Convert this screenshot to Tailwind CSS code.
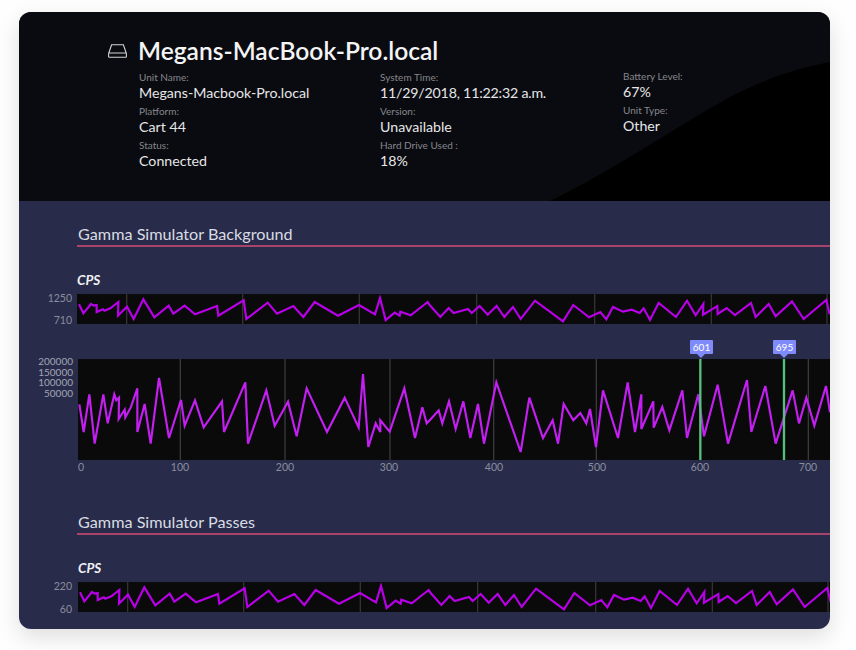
<!DOCTYPE html>
<html lang="en">
<head>
    <meta charset="UTF-8">
    <meta name="viewport" content="width=device-width, initial-scale=1.0">
    <script src="https://cdn.jsdelivr.net/npm/@tailwindcss/browser@4"></script>
    <title>Unit details</title>
</head>
<body class="bg-[#fefefe] font-['Lato','Open_Sans',sans-serif]">
    <div class="pt-[12px] pl-[19px] w-[856px] h-[650px] overflow-hidden">
        <div class="w-[811px] h-[617px] rounded-[12px] overflow-hidden bg-[#282c4a] shadow-[0_8px_22px_rgba(0,0,0,0.13)]">

            <!-- unit header -->
            <div class="relative h-[189px] bg-[#0a0b10]">
                <svg class="absolute left-0 top-0" width="811" height="189" viewBox="0 0 811 189">
                    <path d="M531 189 C 600 155, 640 125, 711 85 C 750 65, 780 56, 811 50 L811 189 Z" fill="#000"></path>
                </svg>
                <div class="relative pl-[89px] pt-[24px]">
                    <div class="flex items-center h-[30px]">
                        <svg class="mr-[11px]" width="19" height="14" viewBox="0 0 19 14" fill="none" stroke="#d6d6d8" stroke-width="1.1">
                            <path d="M.8 9 3.6.8h11.8L18.2 9"></path>
                            <rect x=".6" y="9" width="17.8" height="4.2" rx=".8"></rect>
                        </svg>
                        <h1 class="text-[24.6px] leading-[30px] font-semibold text-[#f4f4f5]">Megans-MacBook-Pro.local</h1>
                    </div>
                    <div class="flex pl-[31px] mt-[5px]">
                        <div class="w-[241px] flex flex-col gap-[3px]">
                            <div><p class="text-[10px] leading-[12px] text-[#85868c]">Unit Name:</p><p class="text-[14.2px] leading-[19px] text-[#e6e6e8]">Megans-Macbook-Pro.local</p></div>
                            <div><p class="text-[10px] leading-[12px] text-[#85868c]">Platform:</p><p class="text-[14.2px] leading-[19px] text-[#e6e6e8]">Cart 44</p></div>
                            <div><p class="text-[10px] leading-[12px] text-[#85868c]">Status:</p><p class="text-[14.2px] leading-[19px] text-[#e6e6e8]">Connected</p></div>
                        </div>
                        <div class="w-[243px] flex flex-col gap-[3px]">
                            <div><p class="text-[10px] leading-[12px] text-[#85868c]">System Time:</p><p class="text-[14.2px] leading-[19px] tracking-[-0.2px] text-[#e6e6e8]">11/29/2018, 11:22:32 a.m.</p></div>
                            <div><p class="text-[10px] leading-[12px] text-[#85868c]">Version:</p><p class="text-[14.2px] leading-[19px] text-[#e6e6e8]">Unavailable</p></div>
                            <div><p class="text-[10px] leading-[12px] text-[#85868c]">Hard Drive Used :</p><p class="text-[14.2px] leading-[19px] text-[#e6e6e8]">18%</p></div>
                        </div>
                        <div class="-mt-[1px] flex flex-col gap-[3px]">
                            <div><p class="text-[10px] leading-[12px] text-[#85868c]">Battery Level:</p><p class="text-[14.2px] leading-[19px] text-[#e6e6e8]">67%</p></div>
                            <div><p class="text-[10px] leading-[12px] text-[#85868c]">Unit Type:</p><p class="text-[14.2px] leading-[19px] text-[#e6e6e8]">Other</p></div>
                        </div>
                    </div>
                </div>
            </div>

            <!-- gamma simulator background -->
            <div class="pt-[22px]">
                <div class="ml-[58px] pb-[1px] border-b-2 border-[#a8446c]">
                    <h2 class="pl-[1px] text-[16.2px] leading-[21px] text-[#d9dbe3]">Gamma Simulator Background</h2>
                </div>
                <p class="ml-[58px] mt-[25px] text-[13.6px] leading-[16px] font-bold italic text-[#f0f0f4]">CPS</p>
                <div class="flex mt-[6px]">
                    <div class="w-[58px] h-[33px] -mt-[1px] -mb-[2px] pr-[5px] flex flex-col justify-between items-end text-[10.5px] leading-[11px] text-[#8b8d9e]">
                        <span>1250</span><span>710</span>
                    </div>
                    <svg class="block bg-[#0a0a0b]" width="753" height="30" viewBox="172 222 2259 90">
                        <g stroke="#333" stroke-width="4">
                            <path d="M321 222V312M669 222V312M1019 222V312M1371 222V312M1725 222V312M2075 222V312M2422 222V312"></path>
                        </g>
                        <polyline class="cps-line" fill="none" stroke="#b800e8" stroke-width="6.5" stroke-linejoin="miter"></polyline>
                    </svg>
                </div>

                <div class="relative flex mt-[35px]">
                    <div class="w-[59px] pr-[5px] -mt-[3px] flex flex-col items-end text-[10px] leading-[10.7px] text-[#a3a5b4]">
                        <span>200000</span><span>150000</span><span>100000</span><span>50000</span>
                    </div>
                    <svg class="block bg-[#0a0a0b]" width="752" height="101" viewBox="174 72 2256 303">
                        <path d="M481 72V375M795 72V375M1110 72V375M1421 72V375M1729 72V375M2365 72V375" stroke="#3a3a3c" stroke-width="4"></path>
                        <polyline id="bigLine" fill="none" stroke="#c21ff0" stroke-width="6.5"></polyline>
                        <path d="M2041 72V375M2292 72V375" stroke="#55c07e" stroke-width="7"></path>
                    </svg>
                    <!-- markers over the chart -->
                    <div class="absolute left-[671px] -top-[19px] w-[23px] h-[14px] rounded-[1px] bg-[#7f8bfa] text-white text-[10px] leading-[14px] text-center">601</div>
                    <div class="absolute left-[678px] -top-[5px] w-0 h-0 border-x-[4px] border-x-transparent border-t-[4px] border-t-[#7f8bfa]"></div>
                    <div class="absolute left-[754px] -top-[19px] w-[23px] h-[14px] rounded-[1px] bg-[#7f8bfa] text-white text-[10px] leading-[14px] text-center">695</div>
                    <div class="absolute left-[761px] -top-[5px] w-0 h-0 border-x-[4px] border-x-transparent border-t-[4px] border-t-[#7f8bfa]"></div>
                </div>
                <!-- x axis ticks -->
                <div class="relative h-[14px] text-[10.5px] leading-[14px] text-[#8b8d9e]">
                    <span class="absolute left-[62px] -translate-x-1/2 top-[0px]">0</span>
                    <span class="absolute left-[161px] -translate-x-1/2 top-[0px]">100</span>
                    <span class="absolute left-[266px] -translate-x-1/2 top-[0px]">200</span>
                    <span class="absolute left-[370px] -translate-x-1/2 top-[0px]">300</span>
                    <span class="absolute left-[475px] -translate-x-1/2 top-[0px]">400</span>
                    <span class="absolute left-[578px] -translate-x-1/2 top-[0px]">500</span>
                    <span class="absolute left-[681px] -translate-x-1/2 top-[0px]">600</span>
                    <span class="absolute left-[789px] -translate-x-1/2 top-[0px]">700</span>
                </div>
            </div>

            <!-- gamma simulator passes -->
            <div class="pt-[37px]">
                <div class="ml-[58px] pb-[1px] border-b-2 border-[#a8446c]">
                    <h2 class="pl-[1px] text-[16.2px] leading-[21px] text-[#d9dbe3]">Gamma Simulator Passes</h2>
                </div>
                <p class="ml-[59px] mt-[25px] text-[13.6px] leading-[16px] font-bold italic text-[#f0f0f4]">CPS</p>
                <div class="flex mt-[6px]">
                    <div class="w-[59px] h-[34px] -mt-[1px] -mb-[3px] pr-[6px] flex flex-col justify-between items-end text-[10.5px] leading-[11px] text-[#8b8d9e]">
                        <span>220</span><span>60</span>
                    </div>
                    <svg class="block bg-[#0a0a0b]" width="752" height="30" viewBox="172 222 2256 90">
                        <path d="M321 222V312M669 222V312M1019 222V312M1371 222V312M1725 222V312M2075 222V312M2422 222V312" stroke="#333" stroke-width="4"></path>
                        <polyline class="cps-line" fill="none" stroke="#b800e8" stroke-width="6.5"></polyline>
                    </svg>
                </div>
            </div>
        </div>
    </div>
<script>
    // points traced from the charts, second half is shifted on to the first
    const cpsLeft = [[178,253],[191,280],[214,252],[222,257],[231,255],[231,276],[250,268],[254,272],[272,265],[296,246],[295,287],[322,260],[342,297],[371,238],[404,292],[447,257],[461,281],[495,257],[526,283],[592,258],[596,287],[672,241],[680,297],[744,248],[772,281],[821,258],[851,291],[885,246],[955,287],[1018,255],[1066,283],[1081,234],[1098,300],[1125,278],[1140,287],[1142,275],[1173,286],[1224,246]];
    const cpsRight = [[0,75],[32,111],[57,84],[72,99],[115,87],[126,99],[150,78],[174,104],[201,78],[224,111],[250,81],[273,117],[316,62],[400,124],[431,75],[478,112],[512,96],[530,118],[550,81],[580,95],[606,89],[630,99],[642,85],[661,120],[687,69],[739,111],[772,62],[798,106],[821,72],[820,104],[863,78],[864,102],[891,84],[916,105],[964,69],[978,111],[1017,72],[1038,109],[1087,64],[1122,117],[1190,60],[1200,103]];
    const bigLeft = [[178,208],[191,291],[208,178],[224,326],[250,178],[263,265],[283,178],[289,196],[297,188],[296,252],[314,224],[316,247],[332,218],[352,160],[352,291],[374,207],[392,326],[417,129],[447,309],[483,195],[494,272],[525,196],[551,277],[606,199],[612,291],[676,142],[684,326],[739,166],[764,272],[804,200],[830,304],[860,160],[921,291],[974,188],[1016,278],[1029,117],[1045,336],[1067,265],[1081,291],[1081,256],[1109,290],[1153,160],[1185,309],[1207,217],[1220,265]];
    const bigRight = [[0,255],[26,226],[37,265],[57,199],[77,282],[100,199],[121,309],[144,207],[162,326],[199,142],[272,351],[298,188],[339,309],[368,256],[384,326],[401,207],[430,256],[451,234],[469,265],[480,222],[498,336],[519,166],[564,309],[593,142],[615,291],[634,178],[634,282],[670,199],[671,278],[697,216],[718,286],[757,166],[771,309],[805,178],[822,304],[863,149],[894,326],[951,135],[964,291],[1006,153],[1037,326],[1088,166],[1107,265],[1129,188],[1153,272],[1188,153],[1200,232]];

    const toPoints = (left, right, dy) => left.map(p => p.join(','))
        .concat(right.map(([x, y]) => (x + 1230) + ',' + (y + dy)))
        .join(' ');

    document.querySelectorAll('.cps-line').forEach(line => {
        line.setAttribute('points', toPoints(cpsLeft, cpsRight, 180));
    });
    document.getElementById('bigLine').setAttribute('points', toPoints(bigLeft, bigRight, 0));
</script>
</body>
</html>
